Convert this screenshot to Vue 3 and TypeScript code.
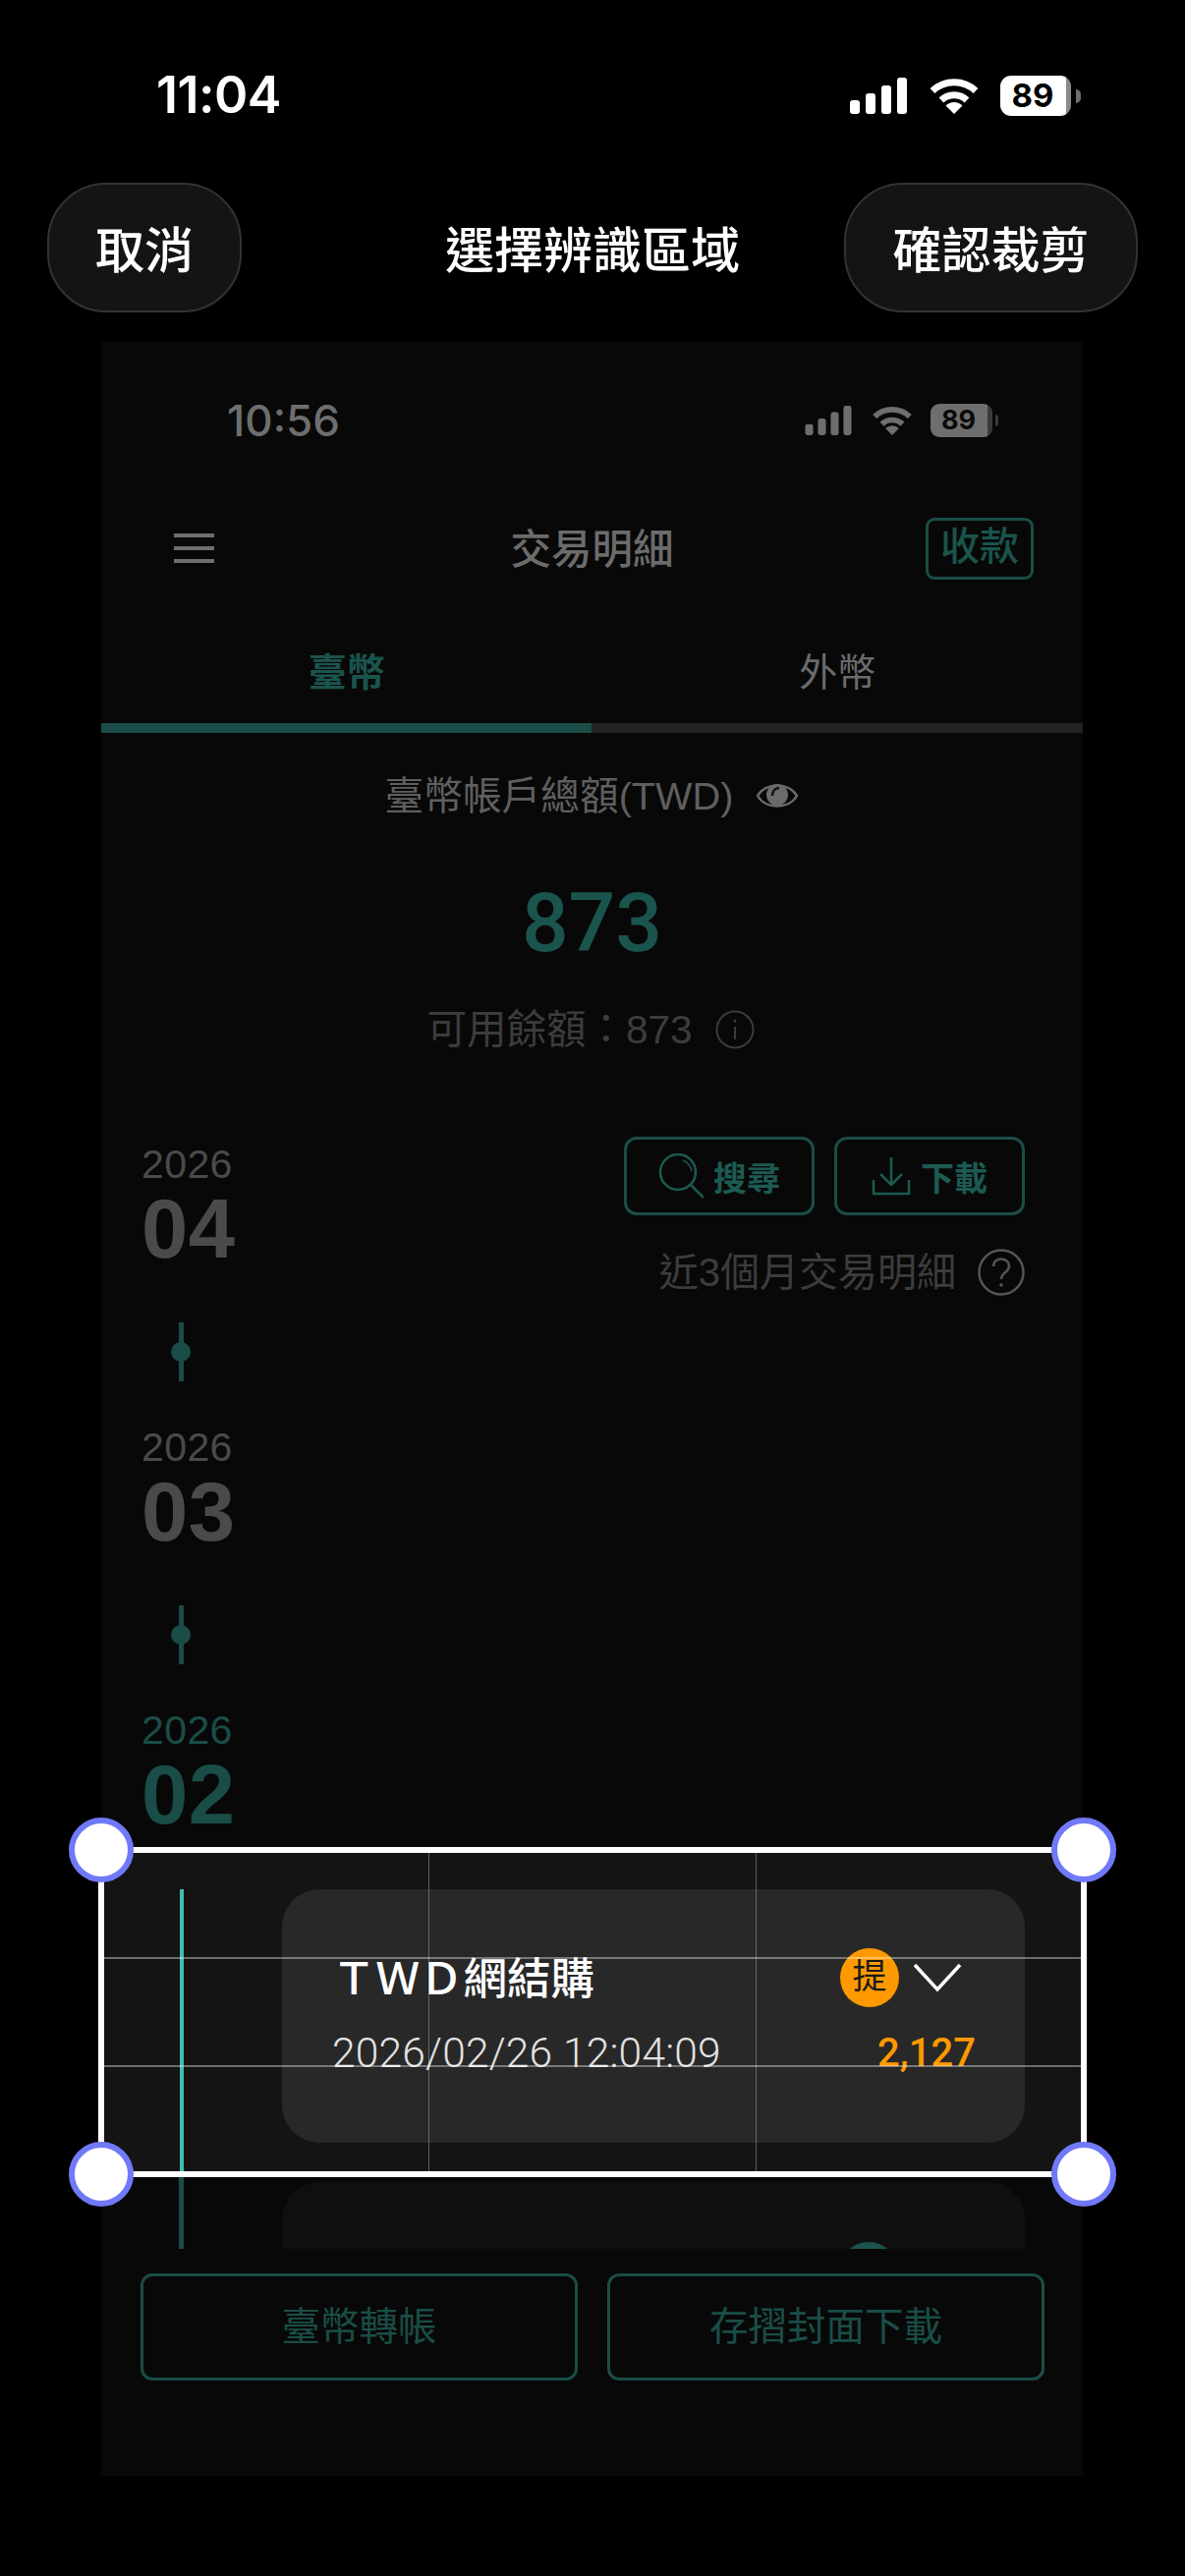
<script setup lang="ts">
interface Month {
  year: string
  month: string
  active: boolean
}

const months: Month[] = [
  { year: '2026', month: '04', active: false },
  { year: '2026', month: '03', active: false },
  { year: '2026', month: '02', active: true },
]

const signalBars = [
  { x: 0, y: 23, h: 14 },
  { x: 16, y: 16, h: 21 },
  { x: 32, y: 8, h: 29 },
  { x: 48, y: 0, h: 37 },
]
</script>

<template>
  <div class="page">
    <div class="status">
      <span class="time">11:04</span>
      <div class="status-icons">
        <svg width="58" height="37" viewBox="0 0 58 37" fill="#fff">
          <rect v-for="b in signalBars" :key="b.x" :x="b.x" :y="b.y" width="10" :height="b.h" rx="3" />
        </svg>
        <svg class="wifi" width="50" height="37" viewBox="0 0 50 37" fill="none" stroke="#fff" stroke-width="7">
          <path d="M3 13.5 A32 32 0 0 1 47 13.5" />
          <path d="M12 23 A19 19 0 0 1 38 23" />
          <path d="M25 37 L16.5 28.5 A12 12 0 0 1 33.5 28.5 Z" fill="#fff" stroke="none" />
        </svg>
        <div class="battery">
          <div class="battery-body"><span>89</span></div>
          <i class="battery-nub"></i>
        </div>
      </div>
    </div>

    <div class="top-bar">
      <button class="pill cancel"><span>取消</span></button>
      <span class="top-title">選擇辨識區域</span>
      <button class="pill confirm"><span>確認裁剪</span></button>
    </div>

    <div class="shot">
      <div class="shot-status">
        <span class="shot-time">10:56</span>
        <div class="shot-icons">
          <svg width="48" height="30" viewBox="0 0 58 37" fill="#6e6e6e">
            <rect v-for="b in signalBars" :key="b.x" :x="b.x" :y="b.y" width="10" :height="b.h" rx="3" />
          </svg>
          <svg class="shot-wifi" width="42" height="30" viewBox="0 0 50 37" fill="none" stroke="#6e6e6e" stroke-width="7">
            <path d="M3 13.5 A32 32 0 0 1 47 13.5" />
            <path d="M12 23 A19 19 0 0 1 38 23" />
            <path d="M25 37 L16.5 28.5 A12 12 0 0 1 33.5 28.5 Z" fill="#6e6e6e" stroke="none" />
          </svg>
          <div class="battery small">
            <div class="battery-body"><span>89</span></div>
            <i class="battery-nub"></i>
          </div>
        </div>
      </div>

      <div class="shot-nav">
        <div class="burger"><i></i><i></i><i></i></div>
        <span class="shot-title">交易明細</span>
        <span class="receive">收款</span>
      </div>

      <div class="tabs">
        <span class="tab active">臺幣</span>
        <span class="tab">外幣</span>
      </div>
      <div class="tab-bar"><i></i></div>

      <div class="scroll">
        <div class="total-label">
          <span>臺幣帳戶總額(TWD)</span>
          <svg width="44" height="30" viewBox="0 0 44 30" fill="none" stroke="#6b6b6b" stroke-width="2.5">
            <path d="M2 15 C10 1 34 1 42 15 C34 29 10 29 2 15 Z" />
            <circle cx="22" cy="14" r="11" fill="#6b6b6b" stroke="none" />
            <path d="M17 15 C17 10 20 7 24 7" stroke="#111" stroke-width="2.5" />
          </svg>
        </div>
        <div class="total">873</div>
        <div class="available">
          <span>可用餘額：873</span>
          <svg width="40" height="40" viewBox="0 0 40 40" fill="none" stroke="#3c3c3c" stroke-width="2">
            <circle cx="20" cy="20" r="18.5" />
            <path d="M20 17 V30" />
            <circle cx="20" cy="11" r="1.5" fill="#3c3c3c" stroke="none" />
          </svg>
        </div>

        <div class="body">
          <div class="rail">
            <template v-for="(m, i) in months" :key="m.month">
              <div class="month" :class="{ current: m.active }">
                <div class="month-year">{{ m.year }}</div>
                <div class="month-num">{{ m.month }}</div>
              </div>
              <div v-if="i < months.length - 1" class="connector"><i></i></div>
            </template>
            <div class="rail-line"></div>
          </div>

          <div class="list">
            <div class="actions">
              <button class="action">
                <svg width="46" height="46" viewBox="0 0 46 46" fill="none" stroke="#1c5a52" stroke-width="2.5">
                  <circle cx="20" cy="19" r="18" />
                  <path d="M33 32 L46 45" />
                  <path d="M25 7 C30 9 33 13 34 18" stroke-width="1.5" />
                </svg>
                <span>搜尋</span>
              </button>
              <button class="action">
                <svg width="40" height="40" viewBox="0 0 40 40" fill="none" stroke="#1c5a52" stroke-width="2.5">
                  <path d="M20 1 V29 M9 18 L20 29 L31 18" />
                  <path d="M2 24 V38 H38 V24" />
                </svg>
                <span>下載</span>
              </button>
            </div>
            <div class="hint">
              <span>近3個月交易明細</span>
              <svg width="48" height="48" viewBox="0 0 48 48" fill="none" stroke="#555" stroke-width="2.5">
                <circle cx="24" cy="24" r="22.5" />
                <path d="M16 18 C16 8 32 8 32 18 C32 24 24 24 24 31" />
                <circle cx="24" cy="37" r="1.8" fill="#555" stroke="none" />
              </svg>
            </div>
            <div class="card dim"></div>
            <div class="card dim">
              <i class="dim-badge"></i>
            </div>
          </div>
        </div>
      </div>

      <div class="shot-footer">
        <button class="foot-btn"><span>臺幣轉帳</span></button>
        <button class="foot-btn"><span>存摺封面下載</span></button>
      </div>
    </div>

    <!-- crop window -->
    <div class="crop">
      <div class="crop-content">
        <i class="crop-line"></i>
        <div class="card bright">
          <div class="card-row first">
            <span class="card-title">ＴＷＤ網結購</span>
            <div class="card-side">
              <span class="badge">提</span>
              <svg width="50" height="30" viewBox="0 0 50 30" fill="none" stroke="#fff" stroke-width="3.5">
                <path d="M2 2 L25 27 L48 2" />
              </svg>
            </div>
          </div>
          <div class="card-row second">
            <span class="card-date">2026/02/26 12:04:09</span>
            <span class="card-amount">2,127</span>
          </div>
        </div>
      </div>
      <i class="grid-v g1"></i>
      <i class="grid-v g2"></i>
      <i class="grid-h g3"></i>
      <i class="grid-h g4"></i>
      <i class="handle tl"></i>
      <i class="handle tr"></i>
      <i class="handle bl"></i>
      <i class="handle br"></i>
    </div>
  </div>
</template>

<style scoped>
.page {
  position: relative;
  width: 1206px;
  height: 2622px;
  overflow: hidden;
  background: #000;
  color: #fff;
  font-family: "Liberation Sans", "Noto Sans CJK TC", sans-serif;
}

i {
  display: block;
}

button {
  font-family: inherit;
  background: none;
  padding: 0;
}

/* outer status bar */
.status {
  height: 186px;
  padding: 66px 106px 0 159px;
  box-sizing: border-box;
  display: flex;
  justify-content: space-between;
  align-items: flex-start;
}

.time {
  font: 600 52px/62px Inter, sans-serif;
  letter-spacing: -0.5px;
}

.status-icons {
  display: flex;
  align-items: center;
  margin-top: 11px;
}

.wifi {
  margin-left: 23px;
}

.battery {
  display: flex;
  align-items: center;
  margin-left: 22px;
}

.battery-body {
  width: 72px;
  height: 41px;
  border-radius: 11px;
  background: linear-gradient(90deg, #fff 0, #fff 67px, #8a8a8a 67px);
  color: #000;
  font: 700 33px/41px Inter, sans-serif;
  text-align: center;
  padding-right: 6px;
  box-sizing: border-box;
}

.battery-nub {
  width: 5px;
  height: 14px;
  margin-left: 5px;
  border-radius: 0 7px 7px 0;
  background: #6e6e6e;
}

.battery.small .battery-body {
  width: 63px;
  height: 34px;
  border-radius: 9px;
  background: linear-gradient(90deg, #6e6e6e 0, #6e6e6e 58px, #3a3a3a 58px);
  color: #0a0a0a;
  font-size: 27px;
  line-height: 34px;
}

.battery.small .battery-nub {
  width: 3px;
  height: 12px;
  margin-left: 3px;
  background: #3a3a3a;
}

/* top bar */
.top-bar {
  height: 132px;
  padding: 0 48px;
  display: grid;
  grid-template-columns: 1fr auto 1fr;
  align-items: center;
}

.pill {
  height: 132px;
  box-sizing: border-box;
  border: 2px solid #333;
  border-radius: 60px;
  background: #141414;
  color: #fff;
  font-size: 50px;
  font-weight: 500;
}

.pill span {
  display: block;
  margin-top: -3px;
}

.cancel {
  width: 198px;
}

.confirm {
  width: 299px;
  justify-self: end;
}

.top-title {
  font-size: 50px;
  font-weight: 500;
  margin-top: -3px;
}

/* dimmed screenshot */
.shot {
  width: 999px;
  height: 2172px;
  margin: 30px 0 0 103px;
  background: #080808;
  overflow: hidden;
  display: flex;
  flex-direction: column;
}

.shot-status {
  height: 160px;
  flex: none;
  padding: 0 86px 0 128px;
  display: flex;
  justify-content: space-between;
  align-items: center;
}

.shot-time {
  font: 500 44px/50px Inter, sans-serif;
  color: #6e6e6e;
}

.shot-icons {
  display: flex;
  align-items: center;
}

.shot-wifi {
  margin-left: 20px;
}

.battery.small {
  margin-left: 18px;
}

.shot-nav {
  height: 100px;
  flex: none;
  padding: 0 50px;
  display: grid;
  grid-template-columns: 1fr auto 1fr;
  align-items: center;
}

.burger {
  width: 41px;
  margin-left: 24px;
  display: flex;
  flex-direction: column;
  gap: 9px;
}

.burger i {
  height: 4px;
  background: #6e6e6e;
}

.shot-title {
  font-size: 41.5px;
  font-weight: 500;
  color: #6b6b6b;
  margin-top: -4px;
}

.receive {
  justify-self: end;
  width: 110px;
  height: 63px;
  box-sizing: border-box;
  border: 3px solid #1a4d47;
  border-radius: 9px;
  color: #1a544d;
  font-size: 40px;
  font-weight: 500;
  line-height: 52px;
  text-align: center;
}

.tabs {
  height: 104px;
  flex: none;
  padding-top: 24px;
  display: grid;
  grid-template-columns: 1fr 1fr;
}

.tab {
  font-size: 39px;
  line-height: 106px;
  text-align: center;
  color: #6b6b6b;
}

.tab.active {
  font-weight: 700;
  color: #1a544d;
}

.tab-bar {
  height: 10px;
  flex: none;
  background: #222;
}

.tab-bar i {
  width: 499px;
  height: 100%;
  background: #1a4d47;
}

.scroll {
  height: 1543px;
  flex: none;
  overflow: hidden;
}

.total-label {
  margin-top: 40px;
  display: flex;
  justify-content: center;
  align-items: center;
  gap: 23px;
  font-size: 39.7px;
  line-height: 48px;
  color: #5f5f5f;
}

.total {
  margin-top: 56px;
  text-align: center;
  font: 500 84px/100px Roboto, sans-serif;
  color: #1a544d;
}

.available {
  margin-top: 34px;
  padding-right: 3px;
  display: flex;
  justify-content: center;
  align-items: center;
  gap: 23px;
  font-size: 40.5px;
  line-height: 48px;
  color: #3c3c3c;
}

.body {
  margin-top: 85px;
  display: flex;
}

.rail {
  width: 184px;
  flex: none;
  padding: 4px 0 0 41px;
  box-sizing: border-box;
}

.month {
  color: #4a4a4a;
}

.month.current {
  color: #1a4d47;
}

.month-year {
  font-size: 41px;
  line-height: 48px;
  letter-spacing: 0.4px;
}

.month-num {
  font-size: 85px;
  font-weight: 700;
  line-height: 83px;
  letter-spacing: 0.5px;
}

.connector {
  position: relative;
  width: 5px;
  height: 60px;
  margin: 54px 0 43px 38px;
  background: #1a4d47;
}

.connector i {
  position: absolute;
  left: -8px;
  top: 20px;
  width: 20px;
  height: 20px;
  border-radius: 50%;
  background: #1a4d47;
}

.rail-line {
  width: 5px;
  height: 420px;
  margin: 55px 0 0 38px;
  background: #1a4d47;
}

.list {
  flex: 1;
  padding-right: 59px;
}

.actions {
  display: flex;
  justify-content: flex-end;
  gap: 20px;
}

.action {
  width: 194px;
  height: 80px;
  box-sizing: border-box;
  border: 3px solid #1a4d47;
  border-radius: 13px;
  color: #1c5a52;
  font-size: 34px;
  font-weight: 700;
  display: flex;
  justify-content: center;
  align-items: center;
  gap: 10px;
}

.hint {
  margin-top: 34px;
  display: flex;
  justify-content: flex-end;
  align-items: center;
  gap: 22px;
  font-size: 40px;
  line-height: 48px;
  color: #3c3c3c;
}

.card {
  width: 756px;
  height: 258px;
  box-sizing: border-box;
  border-radius: 38px;
}

.card.dim {
  position: relative;
  margin-top: 40px;
  background: #0f0f0f;
  overflow: hidden;
}

.hint + .card.dim {
  margin-top: 604px;
}

.dim-badge {
  position: absolute;
  left: 567px;
  top: 61px;
  width: 60px;
  height: 60px;
  border-radius: 50%;
  background: #1a544d;
}

.shot-footer {
  flex: 1;
  padding: 25px 39px 0 40px;
  display: grid;
  grid-template-columns: 1fr 1fr;
  gap: 30px;
  align-items: start;
}

.foot-btn {
  height: 109px;
  box-sizing: border-box;
  border: 3px solid #1a4d47;
  border-radius: 12px;
  color: #1a4d47;
  font-size: 39.5px;
}

.foot-btn span {
  display: block;
  margin-top: -8px;
}

/* crop window */
.crop {
  position: absolute;
  left: 100px;
  top: 1880px;
  width: 1006px;
  height: 336px;
  box-sizing: border-box;
  border: 6px solid #fff;
  background: #141414;
}

.crop-content {
  display: flex;
  height: 100%;
  box-sizing: border-box;
  padding: 37px 0 0 77px;
}

.crop-line {
  width: 4px;
  background: #3fbfae;
}

.card.bright {
  margin-left: 100px;
  padding: 60px 50px 0 51px;
  background: #282828;
}

.card-row {
  height: 60px;
  display: flex;
  justify-content: space-between;
  align-items: center;
}

.card-row.second {
  height: 48px;
  margin-top: 23px;
}

.card-title {
  font-size: 44.5px;
  font-weight: 500;
  color: #fff;
  margin-top: -5px;
}

.card-side {
  display: flex;
  align-items: center;
  gap: 14px;
  margin-right: 14px;
}

.badge {
  width: 60px;
  height: 60px;
  border-radius: 50%;
  background: #ff9900;
  color: #1a1a1a;
  font-size: 35px;
  line-height: 58px;
  text-align: center;
}

.card-date {
  font: 300 42.5px/48px Roboto, sans-serif;
  letter-spacing: 0.2px;
  color: #e2e2e2;
}

.card-amount {
  font: 500 40px/48px Roboto, sans-serif;
  color: #ff9900;
}

.grid-v {
  position: absolute;
  top: 0;
  bottom: 0;
  width: 1px;
  background: rgba(255, 255, 255, 0.3);
}

.grid-h {
  position: absolute;
  left: 0;
  right: 0;
  height: 2px;
  background: rgba(255, 255, 255, 0.38);
}

.g1 {
  left: 330px;
}

.g2 {
  left: 663px;
}

.g3 {
  top: 106px;
}

.g4 {
  top: 216px;
}

.handle {
  position: absolute;
  width: 66px;
  height: 66px;
  box-sizing: border-box;
  border: 6px solid #7079f8;
  border-radius: 50%;
  background: #fff;
}

.tl {
  left: -36px;
  top: -36px;
}

.tr {
  right: -36px;
  top: -36px;
}

.bl {
  left: -36px;
  bottom: -36px;
}

.br {
  right: -36px;
  bottom: -36px;
}
</style>
